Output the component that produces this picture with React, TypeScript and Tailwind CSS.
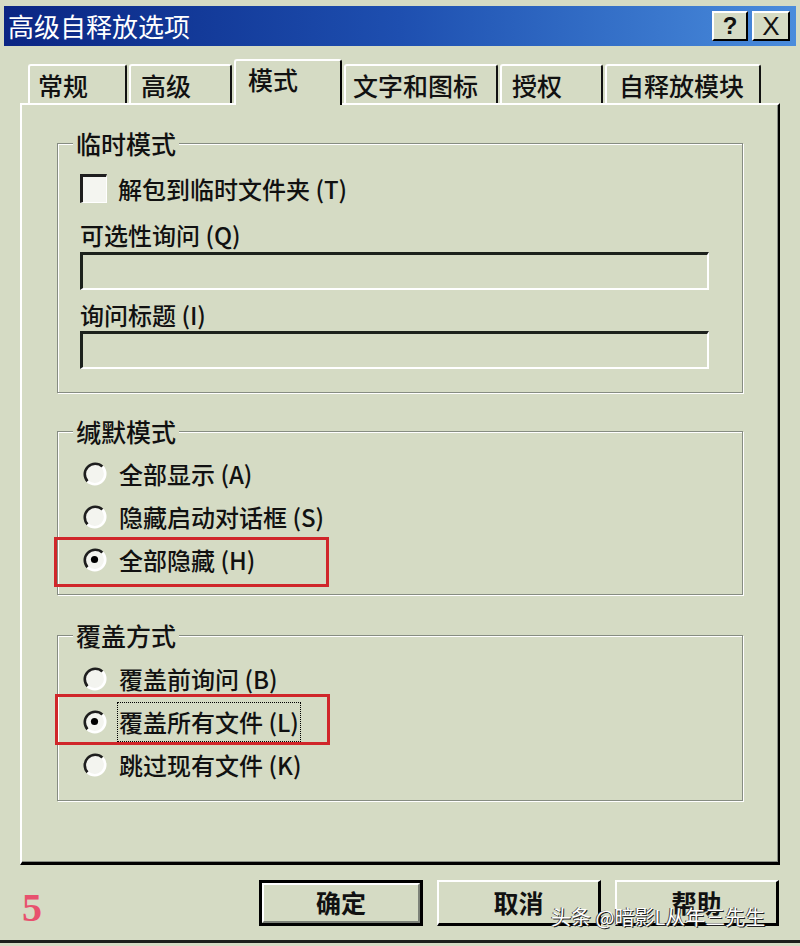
import React from "react";

const BG = "bg-[#d5dbc4]";

function Radio({ checked }: { checked?: boolean }) {
  return (
    <svg width="26" height="26" viewBox="0 0 26 26" className="shrink-0">
      <circle cx="13" cy="13" r="10" fill="#f3f4ef" />
      <path d="M5.58 20.42 A10.5 10.5 0 0 1 20.42 5.58" fill="none" stroke="#1e1e1e" strokeWidth="2.6" />
      <path d="M20.42 5.58 A10.5 10.5 0 0 1 5.58 20.42" fill="none" stroke="#ffffff" strokeWidth="2.6" />
      {checked && <circle cx="12.5" cy="12.5" r="3.6" fill="#000" />}
    </svg>
  );
}

function Group({
  label,
  className,
  children,
}: {
  label: string;
  className: string;
  children: React.ReactNode;
}) {
  return (
    <div
      className={`relative w-[686px] border border-[#868c82] shadow-[inset_1px_1px_0_#ffffff,1px_1px_0_#ffffff] ${className}`}
    >
      <div className={`absolute left-[15px] top-[-17px] px-[3px] h-[32px] leading-[32px] text-[25px] ${BG}`}>
        {label}
      </div>
      {children}
    </div>
  );
}

function Field() {
  return (
    <div className="w-[629px] h-[38px] border-t-[3px] border-l-[3px] border-t-[#1c211c] border-l-[#1c211c] border-r-2 border-b-2 border-r-white border-b-white" />
  );
}

function RadioRow({
  checked,
  text,
  focus,
}: {
  checked?: boolean;
  text: string;
  focus?: boolean;
}) {
  return (
    <div className="h-[43px] flex items-center pl-[24px] gap-[9px]">
      <Radio checked={checked} />
      <span
        className={`text-[24px] leading-[38px] h-[40px] px-[1px] ${
          focus ? "border border-dotted border-black" : "border border-transparent"
        }`}
      >
        {text}
      </span>
    </div>
  );
}

function Tab({
  text,
  w,
  active,
  pl,
}: {
  text: string;
  w: string;
  active?: boolean;
  pl: string;
}) {
  if (active) {
    return (
      <div
        className={`relative z-10 ${w} h-[46px] -mb-[2px] ${BG} border-t-2 border-l-2 border-white border-r-2 border-r-black rounded-t-[3px] ${pl} pt-[2px] text-[25px] leading-[32px]`}
      >
        {text}
      </div>
    );
  }
  return (
    <div
      className={`${w} h-[39px] border-t-2 border-l-2 border-white border-r-2 border-r-[#111] rounded-t-[3px] ${pl} pt-[2px] text-[25px] leading-[34px]`}
    >
      {text}
    </div>
  );
}

function Btn({ text, def }: { text: string; def?: boolean }) {
  if (def) {
    return (
      <div className="w-[164px] h-[46px] border-[3px] border-black">
        <div className="w-full h-full border-t-2 border-l-2 border-white border-r-2 border-b-2 border-r-[#7d8279] border-b-[#7d8279] flex items-center justify-center text-[25px] font-semibold">
          {text}
        </div>
      </div>
    );
  }
  return (
    <div className="w-[164px] h-[46px] border-t-2 border-l-2 border-white border-r-[3px] border-b-[3px] border-r-black border-b-black flex items-center justify-center text-[25px] font-semibold">
      {text}
    </div>
  );
}

export default function App() {
  return (
    <div
      className={`w-[800px] h-[946px] ${BG} flex flex-col overflow-hidden text-[#111] font-medium font-['Noto_Sans_CJK_SC','Noto_Sans',sans-serif]`}
    >
      {/* title bar */}
      <div className="mt-[6px] mx-[4px] h-[40px] bg-linear-to-r from-[#0b2583] via-[#1e4fb0] to-[#4a8cdc] flex items-center justify-between pl-[4px] pr-[6px]">
        <span className="text-white text-[26px] leading-none font-normal">高级自释放选项</span>
        <div className="flex gap-[4px]">
          <div className={`w-[36px] h-[30px] ${BG} border-t-2 border-l-2 border-white border-r-2 border-b-2 border-r-black border-b-black flex items-center justify-center font-['Liberation_Sans',sans-serif] font-bold text-[24px] leading-none`}>
            ?
          </div>
          <div className={`w-[38px] h-[30px] ${BG} border-t-2 border-l-2 border-white border-r-2 border-b-2 border-r-black border-b-black flex items-center justify-center font-['Liberation_Sans',sans-serif] font-normal text-[26px] leading-none`}>
            X
          </div>
        </div>
      </div>

      {/* tabs */}
      <div className="mt-[13px] h-[44px] flex items-end pl-[28px] gap-[2px]">
        <Tab text="常规" w="w-[99px]" pl="pl-[8px]" />
        <Tab text="高级" w="w-[103px]" pl="pl-[10px]" />
        <Tab text="模式" w="w-[108px]" pl="pl-[12px]" active />
        <Tab text="文字和图标" w="w-[154px]" pl="pl-[7px]" />
        <Tab text="授权" w="w-[103px]" pl="pl-[10px]" />
        <Tab text="自释放模块" w="w-[156px]" pl="pl-[12px]" />
      </div>

      {/* panel */}
      <div className="ml-[20px] w-[760px] h-[762px] border-l-2 border-t-2 border-white border-r-2 border-b-[3px] border-r-black border-b-black shadow-[inset_-1px_-1px_0_#8a8f86] pl-[35px] pt-[38px] flex flex-col">
        <Group label="临时模式" className="h-[250px]">
          <div className="pl-[22px] pt-[30px] flex flex-col">
            <div className="h-[29px] flex items-center gap-[11px]">
              <div className="w-[27px] h-[29px] border-t-[3px] border-l-[3px] border-t-[#1e1e1e] border-l-[#1e1e1e] border-r border-b border-r-white border-b-white bg-[#f4f5f0]" />
              <span className="text-[24px] leading-[30px]">解包到临时文件夹 (T)</span>
            </div>
            <div className="mt-[15px] h-[34px] leading-[34px] text-[24px]">可选性询问 (Q)</div>
            <Field />
            <div className="mt-[8px] h-[33px] leading-[33px] text-[24px]">询问标题 (I)</div>
            <Field />
          </div>
        </Group>

        <Group label="缄默模式" className="mt-[38px] h-[164px]">
          <div className="pt-[20px] flex flex-col">
            <RadioRow text="全部显示 (A)" />
            <RadioRow text="隐藏启动对话框 (S)" />
            <RadioRow text="全部隐藏 (H)" checked />
          </div>
          <div className="absolute left-[-4px] top-[105px] w-[275px] h-[50px] border-[3px] border-[#d0262a]" />
        </Group>

        <Group label="覆盖方式" className="mt-[40px] h-[166px]">
          <div className="pt-[21px] flex flex-col">
            <RadioRow text="覆盖前询问 (B)" />
            <RadioRow text="覆盖所有文件 (L)" checked focus />
            <RadioRow text="跳过现有文件 (K)" />
          </div>
          <div className="absolute left-[-3px] top-[58px] w-[275px] h-[51px] border-[3px] border-[#d0262a]" />
        </Group>
      </div>

      {/* buttons */}
      <div className="relative mt-[15px] h-[46px] flex items-center pr-[21px]">
        <span className="pl-[22px] pt-[10px] font-['Liberation_Serif',serif] font-bold text-[40px] leading-none text-[#e8516e]">
          5
        </span>
        <div className="ml-auto flex gap-[14px]">
          <Btn text="确定" def />
          <Btn text="取消" />
          <Btn text="帮助" />
        </div>
        <div className="absolute left-[551px] top-[25px] text-[20px] leading-[24px] font-normal text-white [text-shadow:1px_1px_0_#222,-1px_0_0_#444]">
          头条 @暗影L从年三先生
        </div>
      </div>

      <div className="mt-[14px] h-[3px] bg-[#1d1f1c]" />
    </div>
  );
}
